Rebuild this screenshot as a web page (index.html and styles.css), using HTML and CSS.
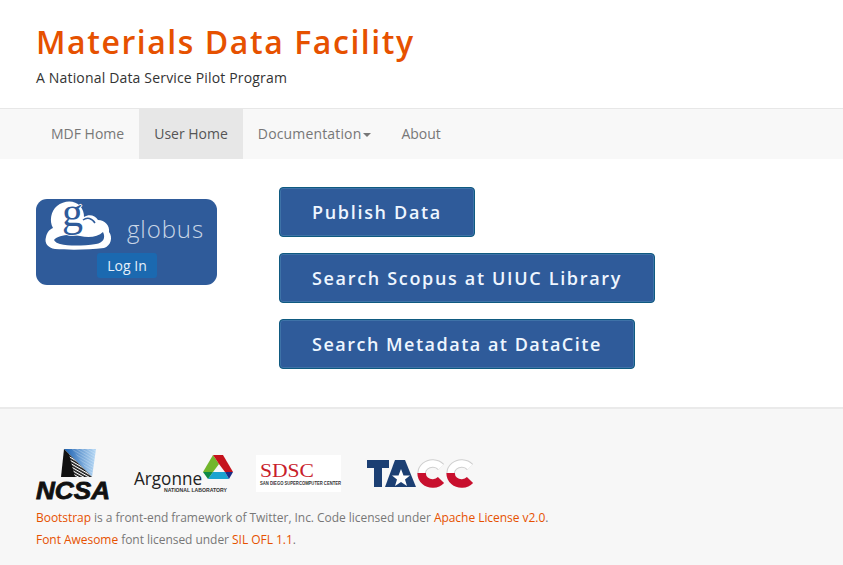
FILE: index.html
```html
<!DOCTYPE html>
<html>
<head>
  <meta charset="utf-8">
  <title>Materials Data Facility</title>
  <meta name="viewport" content="width=device-width, initial-scale=1">
  <link rel="stylesheet" href="styles.css">
</head>
<body>
  <header class="masthead">
    <h1 class="site-title">Materials Data Facility</h1>
    <p class="site-tagline">A National Data Service Pilot Program</p>
  </header>

  <nav class="navbar">
    <a class="nav-link" href="#">MDF Home</a>
    <a class="nav-link active" href="#">User Home</a>
    <a class="nav-link nav-docs" href="#">Documentation<span class="caret"></span></a>
    <a class="nav-link" href="#">About</a>
  </nav>

  <main class="content">
    <a class="globus" href="#">
      <svg class="globus-cloud" width="90" height="68" viewBox="0 -12 90 68">
        <path d="M19 52C12 51 8 46 10 40C11 35 14 32 17 31C13 24 15 14 21 9C28 3 39 3 44 9C47 12 48 16 48 20C53 17 59 18 62 23C69 23 74 29 73 35C77 40 75 49 68 51C52 53 32 53 19 52Z" fill="#fff"/>
        <path d="M18 43C22 38 33 37 44 39C53 41 62 40 67 35C70 41 67 46 60 47C46 49 33 49 24 47C21 46 19 45 18 43Z" fill="#2f5b9a"/>
        <path d="M47 23C51 20 56 21 59 26" stroke="#2f5b9a" stroke-width="1.5" fill="none"/>
        <text x="26" y="29" class="globus-g">g</text>
      </svg>
      <span class="globus-word">globus</span>
      <span class="globus-login">Log In</span>
    </a>

    <div class="actions">
      <a class="btn-action btn-short" href="#">Publish Data</a>
      <a class="btn-action btn-wide" href="#">Search Scopus at UIUC Library</a>
      <a class="btn-action btn-tight" href="#">Search Metadata at DataCite</a>
    </div>
  </main>

  <footer class="footer">
    <div class="partners">
      <svg class="logo-ncsa" width="74" height="50" viewBox="0 0 74 50">
        <defs>
          <linearGradient id="ncsaBlue" x1="0" y1="0" x2="1" y2="0">
            <stop offset="0" stop-color="#1a5fb0"/>
            <stop offset="1" stop-color="#b5d8f5"/>
          </linearGradient>
          <pattern id="ncsaLines" width="2.6" height="2.6" patternUnits="userSpaceOnUse" patternTransform="rotate(30)">
            <rect width="2.6" height="1.1" fill="#fff"/>
          </pattern>
        </defs>
        <path d="M28 0H60L56 28Z" fill="url(#ncsaBlue)"/>
        <path d="M28 0L56 28H25Z" fill="#111"/>
        <path d="M33 5L56 28H39Z" fill="url(#ncsaLines)"/>
        <path d="M36 0H60L56 28Z" fill="url(#ncsaLines)" opacity="0.25"/>
        <text x="0" y="49.500" class="ncsa-text" textLength="74" lengthAdjust="spacingAndGlyphs">NCSA</text>
      </svg>
      <svg class="logo-anl" width="99" height="38" viewBox="134 455 99 38">
        <path d="M213 455L219 464L213 472L203 472Z" fill="#72b62c"/>
        <path d="M213 455H223L233 472H225L219 464Z" fill="#c5121c"/>
        <path d="M213 472H225L229 479H208Z" fill="#1ba3d0"/>
        <path d="M203 472H213L208 479Z" fill="#0d8a45"/>
        <path d="M225 472H233L229 479Z" fill="#1b2d86"/>
        <text x="134" y="484.500" class="anl-name" textLength="68" lengthAdjust="spacingAndGlyphs">Argonne</text>
        <text x="164" y="492" class="anl-sub" textLength="63" lengthAdjust="spacingAndGlyphs">NATIONAL LABORATORY</text>
      </svg>
      <svg class="logo-sdsc" width="85" height="37" viewBox="0 0 85 37">
        <rect width="85" height="37" fill="#fff"/>
        <text x="4" y="22" class="sdsc-name" textLength="54" lengthAdjust="spacingAndGlyphs">SDSC</text>
        <text x="4" y="30" class="sdsc-sub" textLength="81" lengthAdjust="spacingAndGlyphs">SAN DIEGO SUPERCOMPUTER CENTER</text>
      </svg>
      <svg class="logo-tacc" width="107" height="30" viewBox="0 0 107 30">
        <defs>
          <clipPath id="taccTop"><rect x="0" y="-2" width="107" height="15"/></clipPath>
          <clipPath id="taccBottom"><rect x="0" y="13" width="107" height="17"/></clipPath>
          <path id="taccC" d="M0 7A11 10 0 1 0 0 20"/>
        </defs>
        <path d="M0 0H22V8H15V27H7V8H0Z" fill="#1c3f73"/>
        <path d="M28 0H38L49 27H18Z" fill="#1c3f73"/>
        <path d="M34 9L36.500 15.500H43L38 19.500L40 26L34 22L28 26L30 19.500L25 15.500H31.500Z" fill="#fff"/>
        <g fill="none">
          <g clip-path="url(#taccTop)">
            <use href="#taccC" x="74" stroke="#cfcfcf" stroke-width="8.500"/>
            <use href="#taccC" x="74" stroke="#fff" stroke-width="6.500"/>
            <use href="#taccC" x="103" stroke="#cfcfcf" stroke-width="8.500"/>
            <use href="#taccC" x="103" stroke="#fff" stroke-width="6.500"/>
          </g>
          <g clip-path="url(#taccBottom)">
            <use href="#taccC" x="74" stroke="#c8102e" stroke-width="8.500"/>
            <use href="#taccC" x="103" stroke="#c8102e" stroke-width="8.500"/>
          </g>
        </g>
      </svg>
    </div>
    <p class="credit"><a href="#">Bootstrap</a> is a front-end framework of Twitter, Inc. Code licensed under <a href="#">Apache License v2.0</a>.</p>
    <p class="credit"><a href="#">Font Awesome</a> font licensed under <a href="#">SIL OFL 1.1</a>.</p>
  </footer>
</body>
</html>
```

FILE: styles.css
```css
body {
  margin: 0;
  background: #fff;
  color: #333;
  font-family: "Open Sans", sans-serif;
  font-size: 14px;
  overflow: hidden;
}
a {
  text-decoration: none;
}

.masthead {
  height: 108px;
  box-sizing: border-box;
  padding: 20px 36px 0;
}
.site-title {
  margin: 0;
  color: #e65100;
  font-size: 32px;
  font-weight: 600;
  letter-spacing: 1.56px;
  line-height: 44px;
}
.site-tagline {
  margin: 4px 0 0;
  font-size: 14px;
  line-height: 20px;
  letter-spacing: 0.17px;
}

.navbar {
  display: flex;
  height: 51px;
  box-sizing: border-box;
  padding: 0 36px;
  border-top: 1px solid #e7e7e7;
  background: #f8f8f8;
}
.nav-link {
  padding: 15px;
  color: #777;
  line-height: 20px;
}
.nav-link.active {
  background: #e7e7e7;
  color: #555;
}
.nav-docs {
  letter-spacing: 0.15px;
}
.caret {
  display: inline-block;
  margin-left: 2px;
  vertical-align: middle;
  border-top: 4px solid #777;
  border-left: 4px solid transparent;
  border-right: 4px solid transparent;
}

.content {
  display: flex;
  align-items: flex-start;
  height: 248px;
  box-sizing: border-box;
  padding: 28px 36px 0;
}
.globus {
  position: relative;
  display: block;
  flex: none;
  width: 181px;
  height: 86px;
  margin-top: 12px;
  margin-right: 62px;
  border-radius: 11px;
  background: #2f5b9a;
}
.globus-cloud {
  position: absolute;
  left: 0;
  top: -14px;
}
.globus-g {
  fill: #2f5b9a;
  stroke: #fff;
  stroke-width: 1.5px;
  paint-order: stroke;
  font-family: "Liberation Serif", serif;
  font-size: 42px;
}
.globus-word {
  position: absolute;
  left: 91px;
  top: 12px;
  color: #c9d6e6;
  font-size: 24px;
  font-weight: 300;
  letter-spacing: 0.9px;
  line-height: 36px;
}
.globus-login {
  position: absolute;
  left: 61px;
  top: 54px;
  width: 60px;
  height: 25px;
  border-radius: 3px;
  background: #1b69b0;
  color: #e6f0fa;
  font-size: 14px;
  line-height: 25px;
  text-align: center;
}

.actions {
  display: flex;
  flex-direction: column;
  align-items: flex-start;
  gap: 16px;
}
.btn-action {
  padding: 10px 32px;
  border: 1px solid #0f5a80;
  border-radius: 4px;
  box-shadow: inset 0 0 0 1px #3e72a8;
  background: #2f5b9a;
  color: #eef6ff;
  font-size: 18px;
  font-weight: 600;
  line-height: 28px;
}
.btn-short {
  letter-spacing: 1.68px;
}
.btn-wide {
  letter-spacing: 1.67px;
}
.btn-tight {
  letter-spacing: 1.5px;
}

.footer {
  height: 158px;
  box-sizing: border-box;
  padding: 40px 36px 0;
  border-top: 2px solid #eaeaea;
  background: #f7f7f7;
}
.partners {
  display: flex;
  align-items: flex-end;
  height: 50px;
  margin-bottom: 8px;
}
.partners svg {
  flex: none;
  overflow: visible;
}
.logo-ncsa {
  margin-right: 24px;
}
.ncsa-text {
  fill: #111;
  stroke: #111;
  stroke-width: 0.8px;
  font-family: "Liberation Sans", sans-serif;
  font-size: 24px;
  font-style: italic;
  font-weight: 700;
}
.logo-anl {
  margin-right: 23px;
  margin-bottom: 6px;
}
.anl-name {
  fill: #222;
  font-family: "Open Sans", sans-serif;
  font-size: 19px;
}
.anl-sub {
  fill: #333;
  font-family: "Liberation Sans", sans-serif;
  font-size: 5px;
  font-weight: 700;
}
.logo-sdsc {
  margin-right: 26px;
  margin-bottom: 7px;
}
.sdsc-name {
  fill: #c8202a;
  font-family: "Liberation Serif", serif;
  font-size: 18px;
}
.sdsc-sub {
  fill: #333;
  font-family: "Liberation Sans", sans-serif;
  font-size: 6px;
  font-weight: 700;
}
.logo-tacc {
  margin-bottom: 9px;
}
.credit {
  margin: 0;
  color: #777;
  font-size: 12px;
  letter-spacing: -0.04px;
  line-height: 22px;
}
.credit a {
  color: #e65100;
}
```
